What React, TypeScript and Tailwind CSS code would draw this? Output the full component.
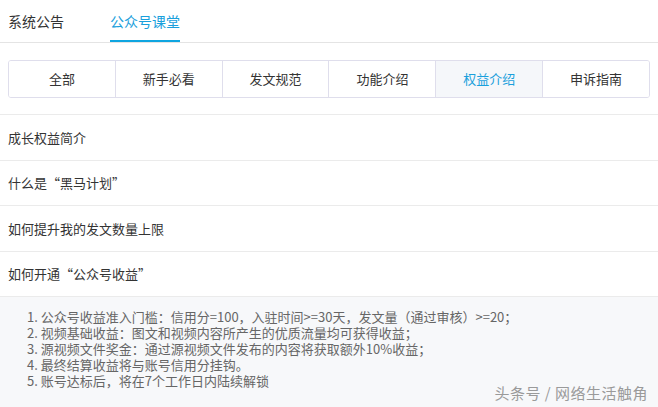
import { useState } from "react";

const cats = ["全部", "新手必看", "发文规范", "功能介绍", "权益介绍", "申诉指南"];

const items = ["成长权益简介", "什么是“黑马计划”", "如何提升我的发文数量上限", "如何开通“公众号收益”"];

const notes = [
  "公众号收益准入门槛：信用分=100，入驻时间>=30天，发文量（通过审核）>=20；",
  "视频基础收益：图文和视频内容所产生的优质流量均可获得收益；",
  "源视频文件奖金：通过源视频文件发布的内容将获取额外10%收益；",
  "最终结算收益将与账号信用分挂钩。",
  "账号达标后，将在7个工作日内陆续解锁",
];

export default function App() {
  const [active, setActive] = useState("权益介绍");

  return (
    <div className="relative h-[407px] w-[658px] overflow-hidden bg-white font-['Noto_Sans_CJK_SC','Noto_Sans',sans-serif] text-[#333]">
      {/* top tabs */}
      <div className="flex h-[43px] items-stretch border-b border-[#e4e4e4] px-2">
        <div className="flex items-center text-[14px] text-[#333]">系统公告</div>
        <div className="relative ml-[46px] flex items-center text-[14px] text-[#1aa0dc]">
          公众号课堂
          <span className="absolute bottom-0 left-0 right-0 h-[2px] bg-[#0ea5e0]" />
        </div>
      </div>

      {/* category segments */}
      <div className="mx-2 mt-[17px] flex h-[38px] overflow-hidden rounded-[3px] border border-[#dfdeec]">
        {cats.map((c, i) => (
          <button
            key={c}
            onClick={() => setActive(c)}
            className={
              "flex flex-1 items-center justify-center text-[13px] " +
              (i > 0 ? "border-l border-[#dfdeec] " : "") +
              (active === c ? "bg-[#f5f7fa] text-[#1aa0dc]" : "bg-white text-[#333]")
            }
          >
            {c}
          </button>
        ))}
      </div>

      {/* question list */}
      <div className="mt-4 border-t border-[#ebebeb]">
        {items.map((t) => (
          <div key={t} className="flex h-[45.5px] items-center border-b border-[#ebebeb] px-2 text-[13px] text-[#333]">
            {t}
          </div>
        ))}
      </div>

      {/* answer */}
      <div className="h-[112px] bg-[#f7f8fa] pl-[27px] pt-[12px]">
        <ol className="text-[13px] leading-[16px] text-[#666]">
          {notes.map((n, i) => (
            <li key={i}>
              {i + 1}. {n}
            </li>
          ))}
        </ol>
      </div>

      <div className="absolute bottom-[3px] right-[10px] text-[15px] tracking-[0.5px] text-[#9a9a9a]">
        头条号 / 网络生活触角
      </div>
    </div>
  );
}
